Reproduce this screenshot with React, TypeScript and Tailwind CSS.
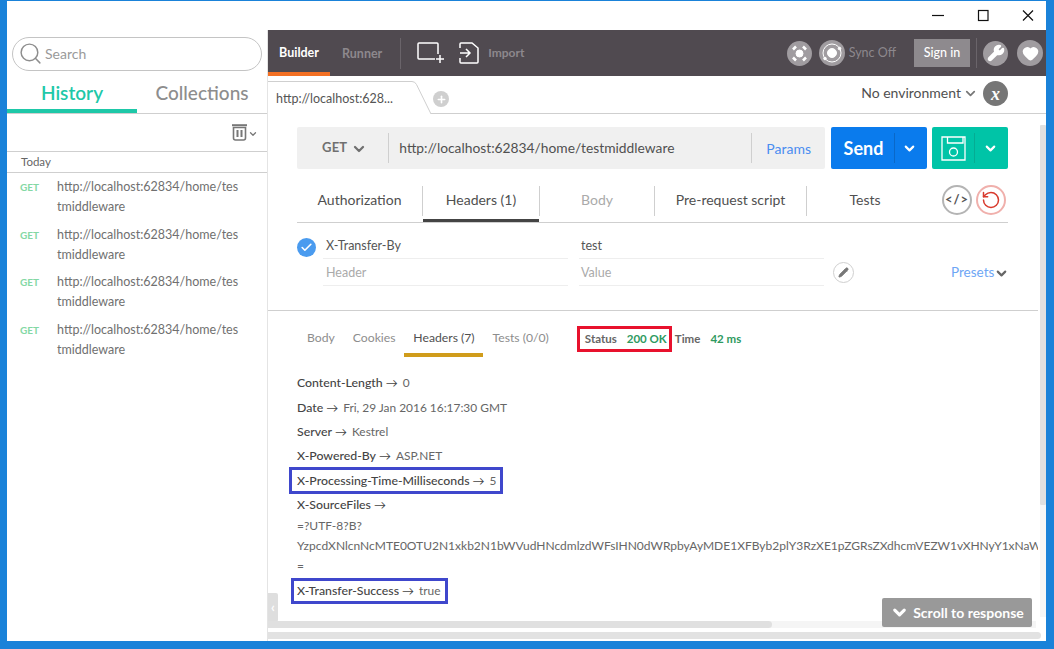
import { ChevronDown, Pencil, Search, Check, Heart, Wrench, RotateCcw, Plus } from 'lucide-react'

const HISTORY = [0, 1, 2, 3]

const RESPONSE_HEADERS = [
  { name: 'Content-Length', value: '0', h: 'h-[25px]' },
  { name: 'Date', value: 'Fri, 29 Jan 2016 16:17:30 GMT', h: 'h-[24px]' },
  { name: 'Server', value: 'Kestrel', h: 'h-[25px]' },
  { name: 'X-Powered-By', value: 'ASP.NET', h: 'h-[22px]' },
]

function Arrow() {
  return <span className="mx-[3px] text-[12px] text-[#444]">→</span>
}

function HeaderLine({ name, value }: { name: string; value?: string }) {
  return (
    <span className="whitespace-nowrap text-[12.2px] text-[#666]">
      <span className="text-[12.3px] font-medium text-[#444]">{name}</span>
      <Arrow />
      {value ? <span className="ml-[2px] text-[11.9px]">{value}</span> : null}
    </span>
  )
}

function Sidebar() {
  return (
    <aside className="flex w-[261px] shrink-0 flex-col border-r border-[#e4e4e4]">
      <div className="px-[5px] pt-[7px]">
        <div className="flex h-[34px] w-[250px] items-center rounded-full border border-[#c4c4c4] pb-[1px] pl-[5px]">
          <Search size={25} strokeWidth={1.4} className="text-[#8e8e8e]" />
          <span className="ml-[2px] text-[14px] text-[#9a9a9a]">Search</span>
        </div>
      </div>
      <div className="flex h-[43px] border-b border-[#cfcfcf]">
        <div className="flex h-[42px] w-[130px] items-center justify-center border-b-4 border-[#1ec8a8] pt-[6px] text-[19px] font-semibold text-[#1ec8a8]">
          History
        </div>
        <div className="flex h-[42px] flex-1 items-center justify-center pt-[3px] text-[19px] font-medium text-[#8d8d8d]">
          Collections
        </div>
      </div>
      <div className="flex h-[38px] items-center justify-end gap-[1px] border-b border-[#cfcfcf] pr-[9px]">
        <svg width="15" height="17" viewBox="0 0 15 17" fill="none" stroke="#777">
          <path d="M0 1.2H15" strokeWidth="2" />
          <path d="M1.5 3.5V14a2 2 0 0 0 2 2h8a2 2 0 0 0 2-2V3.5z" strokeWidth="1.6" />
          <path d="M5.5 6v7M9.5 6v7" strokeWidth="2" />
        </svg>
        <ChevronDown size={10} strokeWidth={3} className="mt-[3px] text-[#777]" />
      </div>
      <div className="flex h-[21px] items-center border-b border-[#cfcfcf] pl-[14px] text-[11.5px] text-[#666]">Today</div>
      <div className="pt-[3px]">
        {HISTORY.map((i) => (
          <div key={i} className="flex h-[47.5px] pl-[13px] pt-[1px]">
            <span className="w-[37px] pt-[3px] text-[10px] font-bold leading-[14px] text-[#84d8a4]">GET</span>
            <span className="w-[183px] break-all text-[12.5px] leading-[20px] text-[#707070]">
              http://localhost:62834/home/testmiddleware
            </span>
          </div>
        ))}
      </div>
    </aside>
  )
}

function TopBar() {
  return (
    <div className="flex h-[46px] items-center bg-[#504a50] text-[12.5px]">
      <div className="flex h-full w-[62px] items-center justify-center border-b-4 border-[#f47023] pt-[5px] font-bold text-white">Builder</div>
      <span className="ml-[12px] mt-[2px] font-bold text-[#8d888d]">Runner</span>
      <div className="ml-[18px] h-[31px] w-px bg-[#6a646a]" />
      <svg width="28" height="22" viewBox="0 0 28 22" fill="none" stroke="#fff" strokeWidth="1.5" className="ml-[16px]">
        <path d="M18 17H2a1 1 0 0 1-1-1V2a1 1 0 0 1 1-1h18a1 1 0 0 1 1 1v10" />
        <path d="M23 13v8M19 17h8" />
      </svg>
      <svg width="20" height="22" viewBox="0 0 20 22" fill="none" stroke="#fff" strokeWidth="1.5" className="ml-[14px]">
        <path d="M1 6V2a1 1 0 0 1 1-1h11l6 5v14a1 1 0 0 1-1 1H2a1 1 0 0 1-1-1v-4" />
        <path d="M1 11h10M7 7l4 4-4 4" />
      </svg>
      <span className="ml-[9px] text-[12px] font-bold text-[#8d888d]">Import</span>
      <div className="flex-1" />
      <div className="flex h-[25px] w-[25px] items-center justify-center rounded-full bg-[#a09ca0]">
        <svg width="19" height="19" viewBox="0 0 19 19" fill="#fff" stroke="#fff">
          <circle cx="9.5" cy="9.5" r="3.5" />
          <path d="M3 5.5l3 -3M16 5.5l-3 -3M3 13.5l3 3M16 13.5l-3 3" strokeWidth="2.6" />
        </svg>
      </div>
      <div className="ml-[7px] flex h-[26px] w-[26px] items-center justify-center rounded-full bg-[#a09ca0]">
        <svg width="22" height="22" viewBox="0 0 22 22" fill="none" stroke="#fff">
          <circle cx="11" cy="11" r="9" strokeWidth="1" />
          <circle cx="11" cy="11" r="4.5" fill="#fff" />
          <circle cx="18.5" cy="6.5" r="1.3" fill="#fff" />
          <circle cx="4" cy="16.5" r="1.3" fill="#fff" />
        </svg>
      </div>
      <span className="ml-[4px] text-[#8d888d]">Sync Off</span>
      <div className="ml-[18px] flex h-[28px] w-[56px] items-center justify-center bg-[#8e8a8e] pt-[1px] font-medium text-white">Sign in</div>
      <div className="ml-[6px] h-[30px] w-px bg-[#6a646a]" />
      <div className="ml-[6px] flex h-[25px] w-[25px] items-center justify-center rounded-full bg-[#a09ca0]">
        <Wrench size={18} fill="#fff" stroke="#fff" />
      </div>
      <div className="ml-[9px] mr-[3px] flex h-[26px] w-[26px] items-center justify-center rounded-full bg-[#a09ca0]">
        <Heart size={17} fill="#fff" stroke="#fff" />
      </div>
    </div>
  )
}

function TabStrip() {
  return (
    <div className="relative flex h-[38px] border-b border-[#cfcfcf]">
      <div className="flex h-[38px] w-[163px] shrink-0 items-center overflow-hidden bg-white pl-[8px] pt-[9px] text-[12.5px] text-[#555]">
        http://localhost:628...
      </div>
      <svg width="164" height="38" viewBox="0 0 164 38" fill="none" stroke="#cfcfcf" className="absolute left-0 top-0">
        <path d="M0 5.5H144q3 0 4.5 3L163 38" />
      </svg>
      <div className="ml-[2px] mt-[15px] flex h-[16px] w-[16px] items-center justify-center rounded-full bg-[#cfcfcf]">
        <Plus size={11} strokeWidth={3.5} className="text-white" />
      </div>
      <div className="flex-1" />
      <div className="flex items-center pb-[4px] text-[14px] text-[#505050]">
        No environment
        <ChevronDown size={15} strokeWidth={2.8} className="ml-[2px] mt-[1px] text-[#777]" />
      </div>
      <div className="ml-[5px] mr-[38px] mt-[5px] flex h-[25px] w-[25px] items-center justify-center rounded-full bg-[#767676] font-['Liberation_Serif',serif] text-[18px] font-bold italic leading-none text-white">
        x
      </div>
    </div>
  )
}

function RequestBar() {
  return (
    <div className="ml-[29px] mt-[13px] flex h-[42px] w-[711px]">
      <div className="flex h-full w-[528px] items-center rounded-[2px] bg-[#f0f0f0]">
        <span className="ml-[25px] text-[13px] font-bold tracking-[0.2px] text-[#707070]">GET</span>
        <ChevronDown size={16} strokeWidth={3.4} className="ml-[4px] mt-[1px] text-[#707070]" />
        <div className="ml-[21px] h-[30px] w-px bg-[#cfcfcf]" />
        <span className="ml-[10px] text-[13.8px] text-[#505050]">http://localhost:62834/home/testmiddleware</span>
        <div className="flex-1" />
        <div className="h-[30px] w-px bg-[#cfcfcf]" />
        <span className="ml-[14px] mr-[14px] text-[14px] text-[#4a8df0]">Params</span>
      </div>
      <div className="ml-[6px] flex h-full w-[96px] items-center rounded-[2px] bg-[#0a7bed] text-white">
        <span className="w-[63px] pl-[2px] text-center text-[18px] font-bold">Send</span>
        <div className="h-[30px] w-px bg-[#0a68c8]" />
        <ChevronDown size={15} strokeWidth={3.4} className="ml-[7px]" />
      </div>
      <div className="ml-[5px] flex h-full w-[76px] items-center rounded-[2px] bg-[#00c4a7] text-white">
        <svg width="25" height="25" viewBox="0 0 25 25" fill="none" stroke="#fff" strokeWidth="1.3" className="ml-[9px]">
          <path d="M1 1H24V24H1z" />
          <path d="M6.5 1V7H22V1" />
          <circle cx="12.5" cy="16" r="4" />
        </svg>
        <div className="ml-[8px] h-[30px] w-px bg-[#05ac93]" />
        <ChevronDown size={15} strokeWidth={3.4} className="ml-[8px]" />
      </div>
    </div>
  )
}

function RequestTabs() {
  return (
    <div className="ml-[29px] mt-[17px] flex h-[37px] w-[711px] border-b border-[#cfcfcf] text-[14px] text-[#505050]">
      <div className="flex h-[30px] w-[126px] items-center justify-center border-r border-[#cfcfcf] pb-[3px]">Authorization</div>
      <div className="flex h-[36px] w-[116px] items-start justify-center border-b-[3px] border-[#444]">
        <span className="flex h-[27px] items-center">Headers (1)</span>
      </div>
      <div className="flex h-[30px] w-[116px] items-center justify-center border-x border-[#cfcfcf] pb-[3px] text-[#aaa]">Body</div>
      <div className="flex h-[30px] w-[152px] items-center justify-center border-r border-[#cfcfcf] pb-[3px]">Pre-request script</div>
      <div className="flex h-[30px] w-[116px] items-center justify-center pb-[3px]">Tests</div>
      <div className="-mt-[1px] ml-[19px] flex h-[30px] w-[30px] items-center justify-center rounded-full border-2 border-[#b4b4b4] text-[13px] font-bold tracking-[1px] text-[#555]">
        {'</>'}
      </div>
      <div className="-mt-[1px] ml-[4px] flex h-[30px] w-[30px] items-center justify-center rounded-full border-2 border-[#f0b0ac] text-[#d8392c]">
        <RotateCcw size={20} strokeWidth={1.8} />
      </div>
    </div>
  )
}

function RequestHeaders() {
  return (
    <div className="ml-[29px] h-[87px] w-[711px] pt-[14px] text-[12.5px]">
      <div className="flex h-[22px]">
        <div className="mt-px flex h-[19px] w-[19px] shrink-0 items-center justify-center rounded-full bg-[#4a9bef] text-white">
          <Check size={13} strokeWidth={3} />
        </div>
        <div className="ml-[7px] flex h-[22px] w-[245px] shrink-0 items-center border-b border-[#eeeeee] pb-[2px] pl-[3px] text-[#555]">X-Transfer-By</div>
        <div className="ml-[11px] flex h-[22px] w-[245px] shrink-0 items-center border-b border-[#eeeeee] pb-[2px] pl-[2px] text-[#555]">test</div>
      </div>
      <div className="flex h-[27px]">
        <div className="w-[19px] shrink-0" />
        <div className="ml-[7px] flex h-[27px] w-[245px] shrink-0 items-center border-b border-[#eeeeee] pl-[3px] pt-[2px] text-[#aaa]">Header</div>
        <div className="ml-[11px] flex h-[27px] w-[245px] shrink-0 items-center border-b border-[#eeeeee] pl-[2px] pt-[2px] text-[#aaa]">Value</div>
        <div className="ml-[9px] mt-[3px] flex h-[21px] w-[21px] shrink-0 items-center justify-center rounded-full border border-[#cfcfcf] text-[#777]">
          <Pencil size={11} fill="currentColor" />
        </div>
        <div className="ml-[97px] flex h-[27px] items-center whitespace-nowrap pb-[1px] text-[13.5px] text-[#6ea6f5]">
          Presets
          <ChevronDown size={15} strokeWidth={3.4} className="mt-[3px] text-[#666]" />
        </div>
      </div>
    </div>
  )
}

function ResponseTabs() {
  return (
    <div className="flex h-[46px] items-start pl-[39px] pt-[14px] text-[12.2px] text-[#8d8d8d]">
      <span className="flex h-[26px] items-center">Body</span>
      <span className="ml-[18px] flex h-[26px] items-center">Cookies</span>
      <span className="ml-[9px] flex h-[32px] w-[79px] items-start justify-center border-b-4 border-[#d09c1b] pt-[5px] leading-[16px] text-[#505050]">Headers (7)</span>
      <span className="ml-[9px] flex h-[26px] items-center">Tests (0/0)</span>
      <div className="ml-[28px] mt-px flex h-[26px] w-[95px] items-center border-[3px] border-[#e8112d] pl-[5px] text-[11.5px] font-bold text-[#666]">
        Status
        <span className="ml-[10px] text-[#2e9a5f]">200 OK</span>
      </div>
      <div className="ml-[3px] mt-px flex h-[26px] items-center text-[11.5px] font-bold text-[#666]">
        Time
        <span className="ml-[10px] text-[#2e9a5f]">42 ms</span>
      </div>
    </div>
  )
}

function ResponseHeaders() {
  return (
    <div className="w-[770px] overflow-hidden pl-[29px] pt-[14px]">
      {RESPONSE_HEADERS.map((h) => (
        <div key={h.name} className={`flex items-center ${h.h}`}>
          <HeaderLine name={h.name} value={h.value} />
        </div>
      ))}
      <div className="-ml-[8px] flex h-[27px] w-[214px] items-center border-[3px] border-[#3f47cc] pl-[5px] pt-[1px]">
        <HeaderLine name="X-Processing-Time-Milliseconds" value="5" />
      </div>
      <div className="flex h-[22px] items-center pt-[1px]">
        <HeaderLine name="X-SourceFiles" />
      </div>
      <div className="flex h-[20px] items-center text-[12px] text-[#666]">=?UTF-8?B?</div>
      <div className="flex h-[20px] items-center whitespace-nowrap text-[12px] text-[#666]">
        YzpcdXNlcnNcMTE0OTU2N1xkb2N1bWVudHNcdmlzdWFsIHN0dWRpbyAyMDE1XFByb2plY3RzXE1pZGRsZXdhcmVEZW1vXHNyY1xNaWRkbGV3YXJl
      </div>
      <div className="flex h-[20px] items-center text-[12px] text-[#666]">=</div>
      <div className="-ml-[6px] mt-[2px] flex h-[26px] w-[157px] items-center border-[3px] border-[#3f47cc] pl-[3px]">
        <HeaderLine name="X-Transfer-Success" value="true" />
      </div>
    </div>
  )
}

export default function App() {
  return (
    <div className="flex h-[649px] w-[1054px] flex-col overflow-hidden bg-[#1a82d9] pb-[8px] pl-[7px] pr-[8px] pt-px [font-family:Lato,sans-serif]">
      <div className="flex h-[29px] shrink-0 items-start justify-end bg-white">
        <svg width="103" height="29" viewBox="0 0 103 29" fill="none" stroke="#111" strokeWidth="1.2">
          <path d="M1 14.5H13" />
          <rect x="47.5" y="9.5" width="9.5" height="10" />
          <path d="M92 9.5L102 19.5M102 9.5L92 19.5" />
        </svg>
        <div className="w-[12px]" />
      </div>
      <div className="flex min-h-0 flex-1 bg-white">
        <Sidebar />
        <main className="relative min-w-0 flex-1 overflow-hidden">
          <TopBar />
          <TabStrip />
          <RequestBar />
          <RequestTabs />
          <RequestHeaders />
          <div className="mr-[8px] border-t border-[#cfcfcf]">
            <ResponseTabs />
            <ResponseHeaders />
          </div>
          <div className="absolute right-0 top-[95px] h-[380px] w-[6px] rounded-[1px] bg-[#e0e0e0]" />
          <div className="absolute right-0 top-[475px] h-[112px] w-[6px] bg-[#f6f6f6]" />
          <div className="absolute left-0 top-[563px] flex h-[29px] w-[10px] items-center justify-center rounded-r-[2px] bg-[#dedede] text-[13px] font-bold text-white">‹</div>
          <div className="absolute bottom-[13px] left-0 h-[7px] w-[768px] bg-[#f5f5f5]">
            <div className="h-full w-[504px] rounded-r-full bg-[#e0e0e0]" />
          </div>
          <div className="absolute bottom-[2px] left-0 h-[7px] w-[773px] rounded-r-full bg-[#e2e2e2]" />
          <div className="absolute right-[14px] top-[568px] flex h-[29px] w-[150px] items-center justify-center gap-[4px] rounded-[2px] bg-[#999] text-[14px] font-bold text-white">
            <ChevronDown size={19} strokeWidth={4} />
            Scroll to response
          </div>
        </main>
      </div>
    </div>
  )
}
